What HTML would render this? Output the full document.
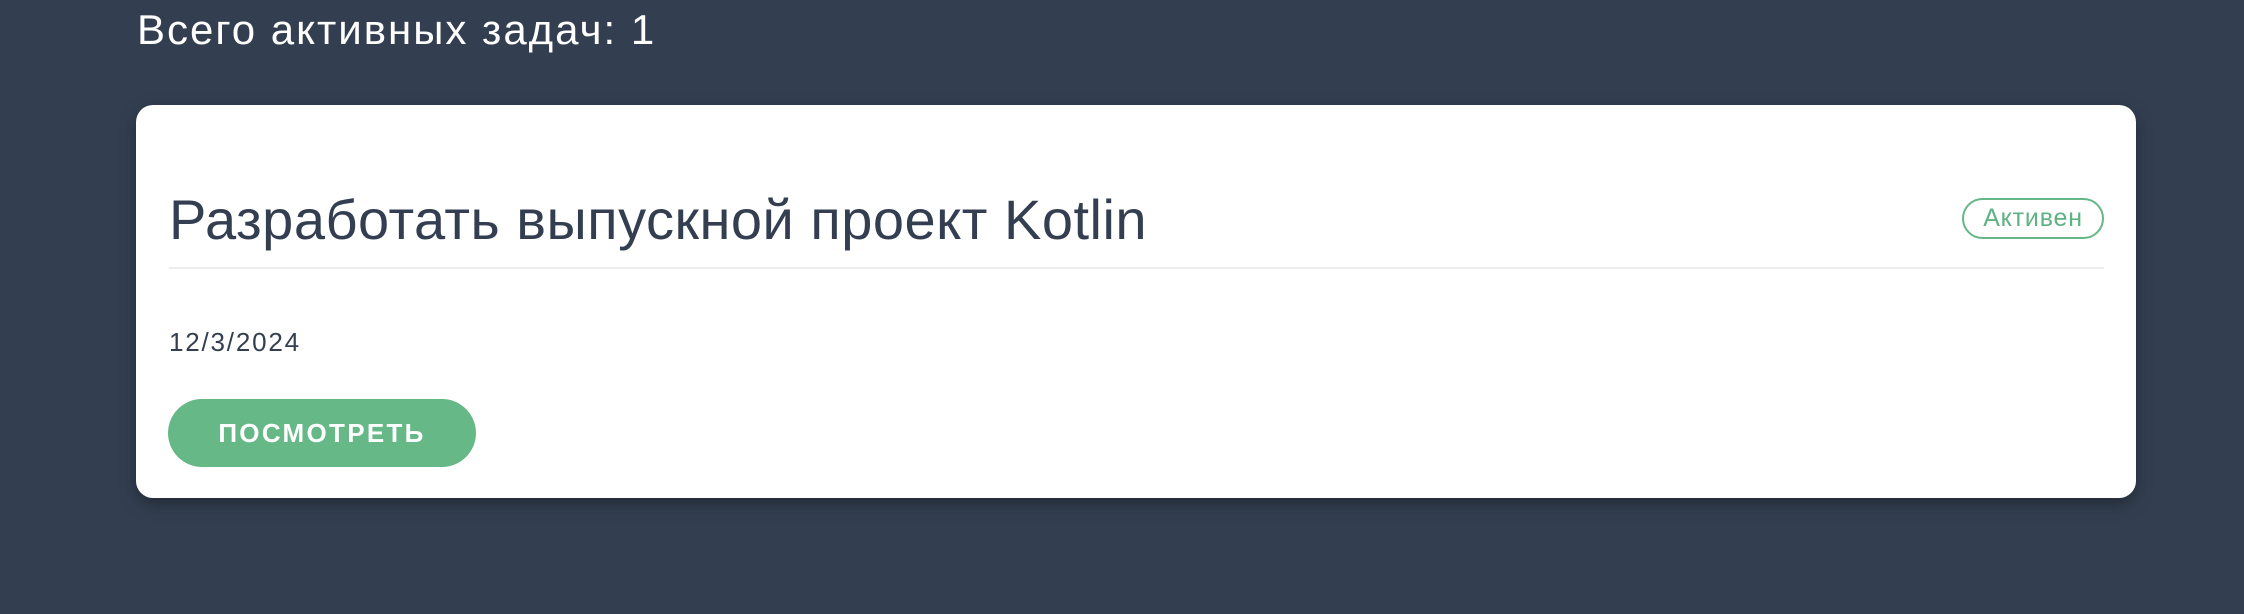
<!DOCTYPE html>
<html><head><meta charset="utf-8"><style>
html,body{margin:0;padding:0}
body{width:2244px;height:614px;background:#333f51;font-family:"Liberation Sans",sans-serif;position:relative;overflow:hidden}
.h{position:absolute;left:137px;top:6px;font-size:42px;letter-spacing:2px;color:#fff;white-space:nowrap}
.card{position:absolute;left:136px;top:105px;width:2000px;height:393px;background:#fff;border-radius:17px;box-shadow:0 6px 16px rgba(0,0,0,.35)}
.t{position:absolute;left:33px;top:82px;font-size:56px;letter-spacing:0.5px;color:#333f51;white-space:nowrap}
.hr{position:absolute;left:33px;right:32px;top:162px;height:2px;background:#ececec}
.b{position:absolute;left:1826px;top:93px;width:138px;height:37px;border:2px solid #66b787;border-radius:22px;color:#5fb283;font-size:25px;letter-spacing:0.8px;line-height:37px;text-align:center}
.d{position:absolute;left:33px;top:222px;font-size:26px;letter-spacing:1.8px;color:#333f51}
.btn{position:absolute;left:32px;top:294px;width:308px;height:68px;border-radius:34px;background:#66b887;color:#fff;font-weight:bold;font-size:26px;letter-spacing:2.3px;line-height:68px;text-align:center}
</style></head><body>
<div class="h">Всего активных задач: 1</div>
<div class="card">
<div class="t">Разработать выпускной проект Kotlin</div>
<div class="b">Активен</div>
<div class="hr"></div>
<div class="d">12/3/2024</div>
<div class="btn">ПОСМОТРЕТЬ</div>
</div>
</body></html>
